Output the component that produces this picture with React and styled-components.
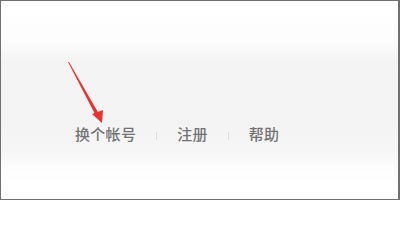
import React from 'react'
import styled, { createGlobalStyle } from 'styled-components'

const Global = createGlobalStyle`
  html, body { margin: 0; padding: 0; background: #fff; }
  body { font-family: "Noto Sans CJK SC", "Noto Sans", sans-serif; }
`

const Frame = styled.div`
  position: relative;
  box-sizing: border-box;
  width: 400px;
  height: 200px;
  border: 1px solid #707070;
  border-right-width: 2px;
  background: linear-gradient(
    to bottom,
    #ffffff 0px,
    #fdfdfd 38px,
    #f4f4f4 60px,
    #f3f3f3 120px,
    #f6f6f6 150px,
    #fdfdfd 168px,
    #ffffff 185px
  );
  display: flex;
  flex-direction: column;
  padding-top: 122px;
  padding-left: 74px;
`

const Links = styled.div`
  display: flex;
  align-items: center;
  gap: 20px;
`

const Link = styled.span`
  font-size: 15px;
  font-weight: 500;
  line-height: 22px;
  color: #737373;
  letter-spacing: 0.3px;
`

const Sep = styled.span`
  width: 1px;
  height: 8px;
  background: #dcdcdc;
  margin-top: 3px;
`

const Arrow = styled.svg`
  position: absolute;
  left: 60px;
  top: 55px;
`

function App() {
  return (
    <>
      <Global />
      <Frame>
        {/* red annotation arrow pointing at the first link */}
        <Arrow width="50" height="75" viewBox="0 0 50 75">
          <polygon points="7,6 8,6 38,58 35,60" fill="#e8322f" />
          <polygon points="31,58 42,54 41,67" fill="#e8322f" />
        </Arrow>
        <Links>
          <Link>换个帐号</Link>
          <Sep />
          <Link>注册</Link>
          <Sep />
          <Link>帮助</Link>
        </Links>
      </Frame>
    </>
  )
}

export default App
